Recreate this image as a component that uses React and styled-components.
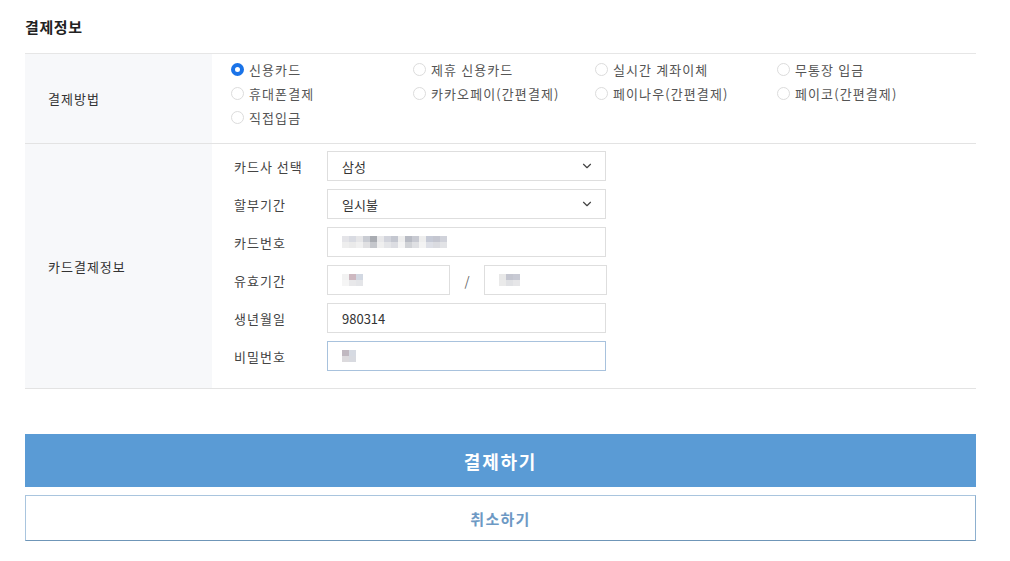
import React from "react";
import styled, { createGlobalStyle } from "styled-components";
import { ChevronDown } from "lucide-react";

const Global = createGlobalStyle`
  * { box-sizing: border-box; }
  html, body { margin: 0; padding: 0; background: #fff; }
  body { font-family: "Noto Sans CJK KR", "Noto Sans", sans-serif; color: #333; }
`;

const Page = styled.div`
  width: 1010px;
  padding: 17px 34px 0 25px;
`;

const Title = styled.h2`
  margin: 0 0 16px;
  font-size: 15px;
  font-weight: 700;
  letter-spacing: 0.6px;
  line-height: 20px;
  color: #222;
`;

const Table = styled.div`
  border-top: 1px solid #e6e6e6;
`;

const Row = styled.div`
  display: flex;
  border-bottom: 1px solid #e3e3e3;
`;

const Head = styled.div`
  width: 187px;
  flex: none;
  background: #f7f8fa;
  display: flex;
  align-items: center;
  padding-left: 23px;
  font-size: 13px;
  letter-spacing: 1px;
  color: #333;
`;

const Cell = styled.div`
  flex: 1;
  padding: ${(p) => p.$pad};
`;

const RadioGrid = styled.div`
  display: grid;
  grid-template-columns: repeat(4, 182px);
`;

const RadioItem = styled.label`
  display: flex;
  align-items: center;
  height: 24px;
  font-size: 13px;
  letter-spacing: 1.1px;
  color: #555;
  gap: 5px;
`;

const Dot = styled.span`
  width: 13px;
  height: 13px;
  border-radius: 50%;
  flex: none;
  background: #fff;
  border: ${(p) => (p.$on ? "4px solid #1a73e8" : "1px solid #dcdcdc")};
`;

const FormRow = styled.div`
  display: flex;
  align-items: center;
  height: 30px;
  & + & { margin-top: 8px; }
`;

const Label = styled.div`
  width: 93px;
  font-size: 13px;
  letter-spacing: 1px;
  color: #444;
`;

const Field = styled.div`
  width: ${(p) => p.$w || 279}px;
  height: 30px;
  border: 1px solid ${(p) => (p.$focus ? "#a8c2dd" : "#dedede")};
  display: flex;
  align-items: center;
  justify-content: space-between;
  padding: 0 11px 0 14px;
  font-size: 13px;
  color: #333;
  background: #fff;
`;

const Slash = styled.span`
  width: 34px;
  text-align: center;
  font-size: 13px;
  color: #666;
`;

const Buttons = styled.div`
  margin-top: 45px;
  display: flex;
  flex-direction: column;
  gap: 8px;
`;

const Primary = styled.button`
  height: 53px;
  border: none;
  background: #5a9bd5;
  color: #fff;
  font-family: inherit;
  font-size: 18px;
  font-weight: 700;
  letter-spacing: 1.8px;
  cursor: pointer;
`;

const Secondary = styled.button`
  height: 46px;
  background: #fff;
  border: 1px solid #a9c5de;
  border-bottom-color: #6f96b8;
  border-right-color: #8db0cf;
  color: #6d99c4;
  font-family: inherit;
  font-size: 15px;
  font-weight: 700;
  letter-spacing: 1.3px;
  cursor: pointer;
`;

const Mosaic = ({ cells, w = 7 }) => (
  <svg width={cells.length * w} height="12" style={{ display: "block" }}>
    {cells.map((c, i) =>
      c.map((col, j) =>
        col ? <rect key={i + "-" + j} x={i * w} y={j * 6} width={w} height="6" fill={col} /> : null
      )
    )}
  </svg>
);

const cardCells = [
  ["#e4e4e8", "#eeeeee"], ["#d9dbe2", "#eaeaea"], ["#e6e6e8", "#f0f0f0"], ["#c9ccd3", "#e0e0e2"],
  ["#a9acb2", "#c5c7cc"], ["#e8e8ea", "#efefef"], ["#d2d4dc", "#e4e5e8"], ["#c4c7d0", "#dcdde2"],
  ["#eeeeee", "#f4f4f4"], ["#b8bbc4", "#d0d2d6"], ["#c8cad2", "#dfe0e3"], ["#eeeeee", "#f3f3f3"],
  ["#c6cad6", "#dddfe6"], ["#c4c6d0", "#dadbe0"], ["#d0d2da", "#e2e3e6"],
];

const methods = [
  ["신용카드", true], ["제휴 신용카드"], ["실시간 계좌이체"], ["무통장 입금"],
  ["휴대폰결제"], ["카카오페이(간편결제)"], ["페이나우(간편결제)"], ["페이코(간편결제)"],
  ["직접입금"],
];

export default function App() {
  return (
    <Page>
      <Global />
      <Title>결제정보</Title>
      <Table>
        <Row>
          <Head>결제방법</Head>
          <Cell $pad="3px 0 14px 19px">
            <RadioGrid>
              {methods.map(([name, on]) => (
                <RadioItem key={name}>
                  <Dot $on={on} />
                  {name}
                </RadioItem>
              ))}
            </RadioGrid>
          </Cell>
        </Row>
        <Row>
          <Head>카드결제정보</Head>
          <Cell $pad="7px 0 17px 22px">
            <FormRow>
              <Label>카드사 선택</Label>
              <Field>
                삼성
                <ChevronDown size={14} strokeWidth={2} color="#444" />
              </Field>
            </FormRow>
            <FormRow>
              <Label>할부기간</Label>
              <Field>
                일시불
                <ChevronDown size={14} strokeWidth={2} color="#444" />
              </Field>
            </FormRow>
            <FormRow>
              <Label>카드번호</Label>
              <Field>
                <Mosaic cells={cardCells} />
              </Field>
            </FormRow>
            <FormRow>
              <Label>유효기간</Label>
              <Field $w={123}>
                <Mosaic cells={[["#f2f2f2", "#f5f5f5"], ["#cdb8c0", "#e8e8ea"], ["#d2d8e2", "#e4e5e8"]]} />
              </Field>
              <Slash>/</Slash>
              <Field $w={123}>
                <Mosaic cells={[["#e8e8e8", "#eaeaea"], ["#c4c6d0", "#e0e1e4"], ["#c8cad4", "#e6e6e8"]]} />
              </Field>
            </FormRow>
            <FormRow>
              <Label>생년월일</Label>
              <Field>980314</Field>
            </FormRow>
            <FormRow>
              <Label>비밀번호</Label>
              <Field $focus>
                <Mosaic cells={[["#c0b8c0", "#dcdadd"], ["#d6dae2", "#d8dae0"]]} />
              </Field>
            </FormRow>
          </Cell>
        </Row>
      </Table>
      <Buttons>
        <Primary>결제하기</Primary>
        <Secondary>취소하기</Secondary>
      </Buttons>
    </Page>
  );
}
